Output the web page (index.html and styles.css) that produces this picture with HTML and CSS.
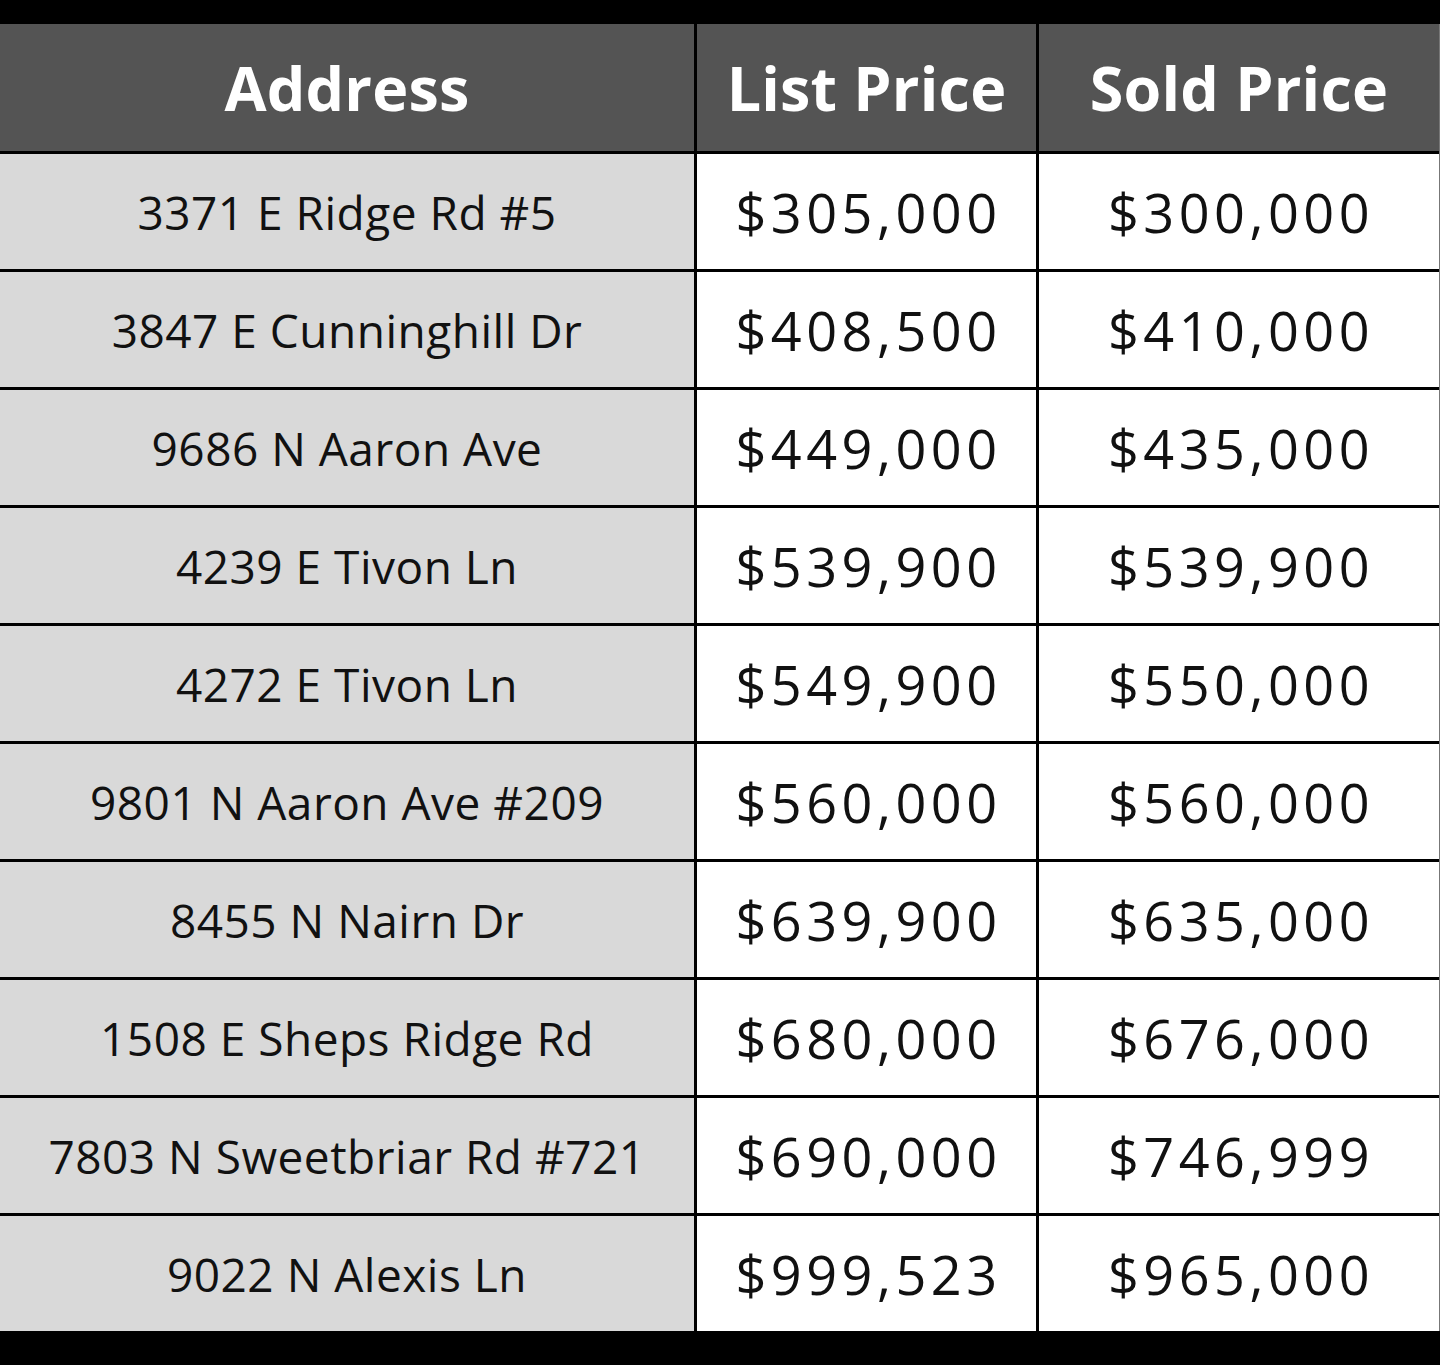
FILE: index.html
```html
<!DOCTYPE html>
<html lang="en">
<head>
<meta charset="utf-8">
<title>Sold Homes</title>
<link rel="stylesheet" href="styles.css">
</head>
<body>
<div class="frame">
  <div class="table">
    <div class="cell head">Address</div>
    <div class="cell head">List Price</div>
    <div class="cell head">Sold Price</div>

    <div class="cell addr">3371 E Ridge Rd #5</div>
    <div class="cell price">$305,000</div>
    <div class="cell price">$300,000</div>

    <div class="cell addr">3847 E Cunninghill Dr</div>
    <div class="cell price">$408,500</div>
    <div class="cell price">$410,000</div>

    <div class="cell addr">9686 N Aaron Ave</div>
    <div class="cell price">$449,000</div>
    <div class="cell price">$435,000</div>

    <div class="cell addr">4239 E Tivon Ln</div>
    <div class="cell price">$539,900</div>
    <div class="cell price">$539,900</div>

    <div class="cell addr">4272 E Tivon Ln</div>
    <div class="cell price">$549,900</div>
    <div class="cell price">$550,000</div>

    <div class="cell addr">9801 N Aaron Ave #209</div>
    <div class="cell price">$560,000</div>
    <div class="cell price">$560,000</div>

    <div class="cell addr">8455 N Nairn Dr</div>
    <div class="cell price">$639,900</div>
    <div class="cell price">$635,000</div>

    <div class="cell addr">1508 E Sheps Ridge Rd</div>
    <div class="cell price">$680,000</div>
    <div class="cell price">$676,000</div>

    <div class="cell addr">7803 N Sweetbriar Rd #721</div>
    <div class="cell price">$690,000</div>
    <div class="cell price">$746,999</div>

    <div class="cell addr">9022 N Alexis Ln</div>
    <div class="cell price">$999,523</div>
    <div class="cell price">$965,000</div>
  </div>
</div>
</body>
</html>
```
FILE: styles.css
```css
html, body {
  margin: 0;
  padding: 0;
  background: #000;
}
body {
  width: 1440px;
  height: 1365px;
  overflow: hidden;
  font-family: "Open Sans", "Liberation Sans", sans-serif;
}
.frame {
  padding-top: 24px;
}
.table {
  display: grid;
  grid-template-columns: 694px 339px 400px;
  grid-template-rows: 127px repeat(10, 115px);
  gap: 3px;
  background: #000;
  width: 1439px;
  border-right: 1px solid #777;
}
.cell {
  display: flex;
  align-items: center;
  justify-content: center;
  color: #111;
  white-space: nowrap;
}
.head {
  background: #545454;
  color: #fff;
  font-weight: 700;
  font-size: 61px;
  letter-spacing: 0.2px;
}
.addr {
  background: #d9d9d9;
  font-size: 46px;
  letter-spacing: 0.5px;
}
.price {
  background: #fff;
  font-size: 54px;
  letter-spacing: 4.5px;
  padding-left: 4px;
}
```
